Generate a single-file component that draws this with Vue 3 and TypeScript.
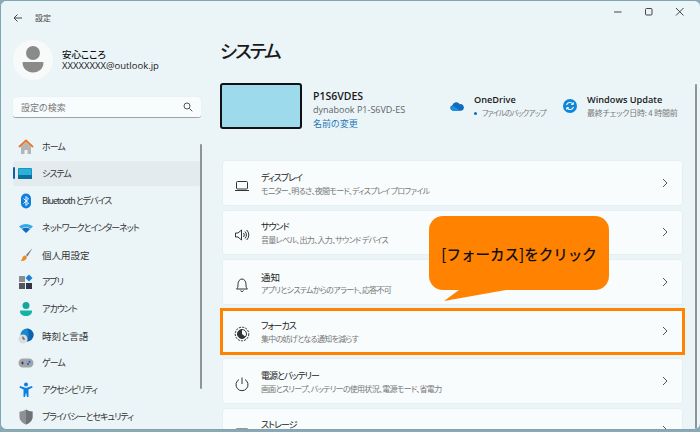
<template>
  <div class="window">
    <aside class="sidebar">
      <div class="titlebar">
        <svg class="back" width="10" height="10" viewBox="0 0 10 10"><path d="M9 5H1M4.500 1.500 1 5l3.500 3.500" fill="none" stroke="#444" stroke-width="1" /></svg>
        <span>設定</span>
      </div>
      <div class="profile">
        <div class="avatar">
          <svg width="40" height="40" viewBox="0 0 40 40">
            <circle cx="20" cy="13" r="7" fill="#8a8a8a" />
            <path d="M10.500 22h19a1 1 0 0 1 1 1c0 5-4.500 9.500-10.500 9.500S9.500 28 9.500 23a1 1 0 0 1 1-1z" fill="#8a8a8a" />
          </svg>
        </div>
        <div class="who">
          <div class="who-name">安心こころ</div>
          <div class="who-mail">XXXXXXXX@outlook.jp</div>
        </div>
      </div>
      <div class="search">
        <span>設定の検索</span>
        <svg width="10" height="10" viewBox="0 0 10 10"><circle cx="4" cy="4" r="3" fill="none" stroke="#555" /><path d="m6.300 6.300 3 3" stroke="#555" /></svg>
      </div>
      <nav class="nav">
        <div v-for="item in navItems" :key="item.label" class="nav-row" :class="{ active: item.active }">
          <i v-if="item.active" class="marker"></i>
          <span class="nav-icon">
            <svg width="16" height="16" viewBox="0 0 16 16" v-html="item.icon"></svg>
          </span>
          <span :class="{ tight: hasKana(item.label) }">{{ item.label }}</span>
        </div>
        <i class="side-scroll"></i>
      </nav>
    </aside>

    <main class="main">
      <div class="controls">
        <svg width="10" height="10" viewBox="0 0 10 10"><path d="M1 5h7.500" stroke="#444" /></svg>
        <svg width="10" height="10" viewBox="0 0 10 10"><rect x="1.500" y="1.500" width="6.500" height="6.500" rx="1" fill="none" stroke="#444" /></svg>
        <svg width="10" height="10" viewBox="0 0 10 10"><path d="m1 1 7.500 7.500M8.500 1 1 8.500" stroke="#444" /></svg>
      </div>
      <h1>システム</h1>
      <section class="device">
        <div class="thumb"></div>
        <div class="device-text">
          <div class="device-name">P1S6VDES</div>
          <div class="device-model">dynabook P1-S6VD-ES</div>
          <div class="device-link">名前の変更</div>
        </div>
        <div class="status one">
          <svg width="14" height="10" viewBox="0 0 15 10">
            <path d="M3 10a3 3 0 0 1-.5-5.900A4.500 4.500 0 0 1 10.500 3 3.500 3.500 0 0 1 12 10z" fill="#0f6cbd" />
            <path d="M3 10a2.800 2.800 0 0 1 .2-5.300l8 5.300z" fill="#1a8fe3" />
          </svg>
          <div>
            <div class="status-title">OneDrive</div>
            <div class="status-sub backup"><b class="dot"></b>ファイルのバックアップ</div>
          </div>
        </div>
        <div class="status">
          <svg width="14" height="14" viewBox="0 0 14 14">
            <circle cx="7" cy="7" r="7" fill="#0f86d8" />
            <path d="M3.500 6.200A3.600 3.600 0 0 1 9.800 4.800M10.500 7.800A3.600 3.600 0 0 1 4.200 9.200" fill="none" stroke="#fff" stroke-width="1.100" />
            <path d="M10.300 3.300v2.100H8.200M3.700 10.700V8.600h2.100" fill="none" stroke="#fff" stroke-width="1" />
          </svg>
          <div>
            <div class="status-title">Windows Update</div>
            <div class="status-sub">最終チェック日時: 4 時間前</div>
          </div>
        </div>
      </section>

      <section class="cards">
        <div v-for="card in cards" :key="card.title" class="card">
          <span class="card-icon">
            <svg width="16" height="16" viewBox="0 0 16 16" v-html="card.icon"></svg>
          </span>
          <div class="card-text">
            <div class="card-title" :class="{ tight: hasKana(card.title) }">{{ card.title }}</div>
            <div class="card-sub">{{ card.sub }}</div>
          </div>
          <svg class="chev" width="6" height="10" viewBox="0 0 6 10"><path d="m1 1 4 4-4 4" fill="none" stroke="#555" /></svg>
        </div>
      </section>
      <i class="main-scroll"></i>
    </main>

    <div class="focus-ring"></div>
    <div class="callout">
      <span>[フォーカス]をクリック</span>
      <svg class="tail" width="62" height="12" viewBox="0 0 62 12"><path d="M15 0 0 11 62 0z" fill="#ff8200" /></svg>
    </div>
  </div>
</template>

<script setup lang="ts">
interface NavItem {
  label: string;
  icon: string;
  active?: boolean;
}

interface Card {
  title: string;
  sub: string;
  icon: string;
}

// カタカナは参照画像のフォントだと幅が狭い
const hasKana = (text: string) => /[ァ-ヶー]/.test(text);

const navItems: NavItem[] = [
  {
    label: 'ホーム',
    icon: '<path d="M3 7.500 8 3l5 4.500V15H9.500v-4h-3v4H3z" fill="#b5b5b5"/><path d="M1 8 8 1.500 15 8" fill="none" stroke="#e8762c" stroke-width="1.800"/>'
  },
  {
    label: 'システム',
    active: true,
    icon: '<rect x="0" y="2" width="14" height="11" rx="1" fill="#1496c4"/><rect x="0" y="9" width="14" height="4" fill="#0c6f9c"/><rect x="1" y="3" width="12" height="6" fill="#2cb0d8"/>'
  },
  {
    label: 'Bluetooth とデバイス',
    icon: '<rect x="3" y="0.500" width="10" height="15" rx="5" fill="#0f7fe0"/><path d="M5.500 5.500 10.500 10 8 12.500v-9l2.500 2.500-5 4.500" fill="none" stroke="#fff"/>'
  },
  {
    label: 'ネットワークとインターネット',
    icon: '<path d="M1 6.500C5 3 11 3 15 6.500l-2.500 2.300C9.500 6.500 6.500 6.500 3.500 8.800z" fill="#35a8e8"/><path d="M3.800 9c2.700-2 5.700-2 8.400 0L8 13z" fill="#0f6cc4"/>'
  },
  {
    label: '個人用設定',
    icon: '<path d="M14.500 1 8 8l1.500 1.500z" fill="#777"/><path d="M7.500 8.500 9 10c-.5 3-3 4.500-6.500 4 1.500-1 1.500-2.500 2.200-4 .6-1 1.800-1.500 2.800-1.500z" fill="#ef8a2c"/>'
  },
  {
    label: 'アプリ',
    icon: '<rect x="1" y="2" width="6" height="6" fill="#8b8b90"/><rect x="1" y="9" width="6" height="6" fill="#55555c"/><rect x="8" y="9" width="6" height="6" fill="#34344a"/><path d="m11 .5 3.500 3.500-3.500 3.500L7.500 4z" fill="#1b7fd8"/>'
  },
  {
    label: 'アカウント',
    icon: '<circle cx="8" cy="4.500" r="3.500" fill="#15a89a"/><path d="M2.500 9.500h11c.5 0 .5.500.5 1 0 2.500-2.500 4.500-6 4.500s-6-2-6-4.500c0-.5 0-1 .5-1z" fill="#12b5a5"/>'
  },
  {
    label: '時刻と言語',
    icon: '<circle cx="9" cy="7" r="6.500" fill="#1a86d0"/><path d="M9 .5a6.500 6.500 0 0 1 0 13c2-3 2-10 0-13z" fill="#0f62ad"/><circle cx="5" cy="11" r="4.500" fill="#dcdcdc"/><path d="M5 8.500V11h2" fill="none" stroke="#444"/>'
  },
  {
    label: 'ゲーム',
    icon: '<rect x="0.500" y="3.500" width="15" height="9" rx="4.500" fill="#a2a4aa"/><path d="M3 8h3M4.500 6.500v3" stroke="#444"/><circle cx="11.500" cy="6.800" r="1.100" fill="#1668c8"/><circle cx="10" cy="9" r="1.100" fill="#1668c8"/>'
  },
  {
    label: 'アクセシビリティ',
    icon: '<circle cx="8" cy="2.500" r="2" fill="#0f7fe0"/><path d="M2 4 8 6l6-2 .6 1.500L10.500 7.500V15H9L8 10.500 7 15H5.500V7.500L1.400 5.500z" fill="#0f7fe0"/>'
  },
  {
    label: 'プライバシーとセキュリティ',
    icon: '<path d="M8 .5c2 1.500 4 2 6.500 2V8c0 3.500-3 6-6.500 7.500C4.500 14 1.500 11.500 1.500 8V2.500C4 2.500 6 2 8 .5z" fill="#8d9196"/><path d="M8 .5c2 1.500 4 2 6.500 2V8c0 3.500-3 6-6.500 7.500z" fill="#6f7378"/>'
  }
];

const cards: Card[] = [
  {
    title: 'ディスプレイ',
    sub: 'モニター、明るさ、夜間モード、ディスプレイ プロファイル',
    icon: '<rect x="2.500" y="3.500" width="11" height="7.500" rx="1" fill="none" stroke="#333"/><path d="M1 12.500h14" stroke="#333" stroke-width="1.200"/>'
  },
  {
    title: 'サウンド',
    sub: '音量レベル、出力、入力、サウンド デバイス',
    icon: '<path d="M1.500 6v4h2.500L7.500 13V3L4 6z" fill="none" stroke="#333"/><path d="M9.500 6a3 3 0 0 1 0 4M11 4.500a5 5 0 0 1 0 7M12.700 3a7 7 0 0 1 0 10" fill="none" stroke="#333"/>'
  },
  {
    title: '通知',
    sub: 'アプリとシステムからのアラート、応答不可',
    icon: '<path d="M2.500 12c1.200-1 1.500-2 1.500-4.500C4 4.500 5.500 2 8 2s4 2.500 4 5.500c0 2.500.3 3.500 1.500 4.500z" fill="none" stroke="#333"/><path d="M6.500 13.500a1.600 1.600 0 0 0 3 0" fill="none" stroke="#333"/>'
  },
  {
    title: 'フォーカス',
    sub: '集中の妨げとなる通知を減らす',
    icon: '<circle cx="8" cy="8" r="6.800" fill="none" stroke="#333" stroke-dasharray="2.200 1"/><circle cx="8" cy="8" r="4.500" fill="none" stroke="#333"/><path d="M8 3.500a4.500 4.500 0 1 0 3.500 7.300L8 8z" fill="#333"/>'
  },
  {
    title: '電源とバッテリー',
    sub: '画面とスリープ、バッテリーの使用状況、電源モード、省電力',
    icon: '<path d="M8 1.500V8" stroke="#333"/><path d="M5 3.500a6 6 0 1 0 6 0" fill="none" stroke="#333"/>'
  },
  {
    title: 'ストレージ',
    sub: 'ストレージ領域、ドライブ、構成規則',
    icon: '<rect x="1.500" y="4" width="13" height="9" rx="1.500" fill="none" stroke="#333"/>'
  }
];
</script>

<style scoped>
.window {
  position: relative;
  width: 700px;
  height: 430px;
  box-sizing: border-box;
  display: flex;
  overflow: hidden;
  background: #ebf5f8;
  border: 1px solid #7fa5b3;
  border-right: 0;
  border-radius: 6px;
  font-family: "Noto Sans CJK JP", "Noto Sans", sans-serif;
  font-feature-settings: "palt";
  color: #2b2b2b;
}

.sidebar {
  width: 207px;
  flex: none;
  padding-left: 12px;
  box-sizing: border-box;
}

.titlebar {
  display: flex;
  align-items: center;
  height: 33px;
  font-size: 8px;
  color: #444;
}

.back {
  margin-right: 12px;
}

.profile {
  display: flex;
  align-items: center;
  gap: 9px;
  margin-top: 6px;
}

.avatar {
  width: 40px;
  height: 40px;
  border-radius: 50%;
  background: #f8f9f9;
}

.who-name {
  font-size: 9.500px;
  font-weight: 500;
  line-height: 12px;
  color: #111;
}

.who-mail {
  font-size: 9.500px;
  line-height: 12px;
  font-family: "Open Sans", "Noto Sans", sans-serif;
  color: #222;
}

.search {
  display: flex;
  justify-content: space-between;
  align-items: center;
  width: 188px;
  height: 21px;
  box-sizing: border-box;
  margin-top: 17px;
  padding: 0 8px;
  background: #f8fcfd;
  border-radius: 3px;
  border-bottom: 1px solid #a0a6a9;
  box-shadow: 0 0 1px #cfd9dd;
  font-size: 9px;
  color: #777;
}

.nav {
  position: relative;
  margin-top: 15px;
  width: 188px;
}

.nav-row {
  position: relative;
  display: flex;
  align-items: center;
  height: 27px;
  font-size: 9.500px;
  color: #333;
  border-radius: 3px;
}

.nav-row.active::before {
  content: "";
  position: absolute;
  inset: 1px 0;
  background: #e3ebee;
  border-radius: 3px;
}

.nav-row > * {
  position: relative;
}

.nav-row .tight {
  font-size: 9px;
  letter-spacing: -1px;
}

.marker {
  position: absolute;
  left: 0;
  top: 7px;
  width: 2px;
  height: 12px;
  background: #0f5fa8;
  border-radius: 1px;
}

.nav-icon {
  width: 29px;
  padding-left: 5px;
  height: 16px;
  flex: none;
  box-sizing: border-box;
}

.side-scroll {
  position: absolute;
  top: 11px;
  right: -1px;
  width: 2px;
  height: 245px;
  background: #8f9498;
  border-radius: 1px;
}

.main {
  position: relative;
  flex: 1;
  min-width: 0;
  padding-left: 12px;
}

.controls {
  position: absolute;
  top: 6px;
  right: 0;
  display: flex;
  gap: 21px;
  padding-right: 15px;
}

h1 {
  margin: 0;
  padding-top: 37px;
  font-size: 18.500px;
  line-height: 24px;
  font-weight: 500;
  letter-spacing: -2px;
  color: #1a1a1a;
}

.device {
  display: flex;
  align-items: center;
  height: 46px;
  margin-top: 21px;
}

.thumb {
  width: 82px;
  height: 46px;
  box-sizing: border-box;
  background: #9ddaeb;
  border: 2px solid #111;
  border-radius: 3px;
  flex: none;
}

.device-text {
  margin-left: 11px;
  padding-top: 7px;
  width: 137px;
  flex: none;
}

.device-name {
  font-size: 10.500px;
  font-weight: 600;
  line-height: 14px;
  font-family: "Open Sans", sans-serif;
  color: #1a1a1a;
}

.device-model {
  font-size: 9px;
  line-height: 14px;
  font-family: "Open Sans", sans-serif;
  color: #5f6468;
}

.device-link {
  font-size: 9px;
  line-height: 13px;
  color: #2a78b8;
}

.status {
  display: flex;
  align-items: center;
  gap: 10px;
  white-space: nowrap;
}

.status.one {
  width: 113px;
  flex: none;
}

.status-title {
  font-size: 9.200px;
  font-weight: 600;
  line-height: 14px;
  font-family: "Open Sans", sans-serif;
  color: #1a1a1a;
}

.status-sub {
  display: flex;
  align-items: center;
  font-size: 8px;
  line-height: 12px;
  letter-spacing: -0.2px;
  color: #777;
}

.status-sub.backup {
  font-size: 7.500px;
  letter-spacing: -0.8px;
}

.dot {
  width: 3px;
  height: 3px;
  margin-right: 5px;
  border-radius: 50%;
  background: #0f6cbd;
}

.cards {
  display: flex;
  flex-direction: column;
  gap: 4px;
  width: 461px;
  margin-top: 31px;
  margin-left: 2px;
}

.card {
  display: flex;
  align-items: center;
  flex: none;
  height: 45.500px;
  padding: 0 14px 0 11px;
  box-sizing: border-box;
  background: #f8fcfd;
  border: 1px solid #e6eff2;
  border-radius: 3px;
}

.card-icon {
  width: 16px;
  height: 16px;
  flex: none;
  margin-right: 11px;
}

.card-text {
  flex: 1;
  padding-top: 1px;
}

.card-title {
  font-size: 9.500px;
  line-height: 14px;
  color: #222;
}

.card-title.tight {
  font-size: 9px;
  letter-spacing: -1px;
}

.card-sub {
  font-size: 8px;
  line-height: 11px;
  letter-spacing: -0.7px;
  color: #777;
}

.main-scroll {
  position: absolute;
  top: 83px;
  right: 3px;
  bottom: 0;
  width: 2px;
  background: #8f9498;
  border-radius: 1px;
}

.focus-ring {
  position: absolute;
  left: 219px;
  top: 307px;
  width: 465px;
  height: 47px;
  box-sizing: border-box;
  border: 3px solid #ff8200;
}

.callout {
  position: absolute;
  left: 428px;
  top: 215px;
  width: 180px;
  height: 74px;
  display: flex;
  align-items: center;
  justify-content: center;
  background: #ff8200;
  border-radius: 14px;
  font-size: 14.500px;
  font-weight: 500;
  font-feature-settings: normal;
  color: #111;
}

.tail {
  position: absolute;
  left: 15px;
  top: 74px;
}
</style>

<style>
html,
body {
  background: #8aa9b5;
}
</style>
